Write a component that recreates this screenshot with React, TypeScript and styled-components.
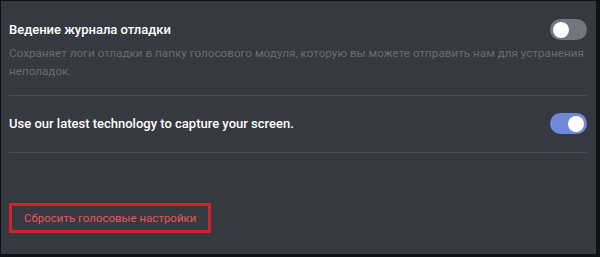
import React, { useState } from "react";
import styled, { createGlobalStyle } from "styled-components";

const Global = createGlobalStyle`
  html, body { margin: 0; padding: 0; background: #36393f; }
  * { box-sizing: border-box; }
`;

const Frame = styled.div`
  width: 600px;
  height: 257px;
  background: #36393f;
  border-style: solid;
  border-color: #101113;
  border-width: 1px 4px 3px 1px;
  padding: 18px 9px 0 8px;
  font-family: Roboto, "Noto Sans", sans-serif;
  display: flex;
  flex-direction: column;
`;

const Section = styled.div<{ $pad: number }>`
  padding-bottom: ${(p) => p.$pad}px;
  border-bottom: 1px solid #4a4d53;
`;

const Row = styled.div`
  display: flex;
  align-items: center;
  justify-content: space-between;
`;

const Title = styled.div`
  color: #ffffff;
  font-size: 13px;
  font-weight: 500;
  line-height: 21px;
`;

const Desc = styled.div`
  color: #6a6d73;
  font-size: 11.7px;
  line-height: 18px;
  margin-top: 4px;
`;

const Track = styled.button<{ $on: boolean }>`
  position: relative;
  width: 37px;
  height: 21px;
  border: none;
  padding: 0;
  border-radius: 11px;
  background: ${(p) => (p.$on ? "#7289da" : "#72767d")};
  cursor: pointer;
  flex-shrink: 0;
`;

const Knob = styled.span<{ $on: boolean }>`
  position: absolute;
  top: 2.5px;
  left: ${(p) => (p.$on ? "18px" : "3px")};
  width: 16px;
  height: 16px;
  border-radius: 50%;
  background: #ffffff;
`;

const SecondSection = styled(Section)`
  padding-top: 17px;
`;

const Highlight = styled.div`
  margin-top: 50px;
  width: 202px;
  height: 30px;
  border: 3px solid #d2232b;
  display: flex;
  align-items: center;
  padding-left: 12px;
`;

const ResetButton = styled.button`
  background: none;
  border: none;
  padding: 0;
  color: #e4575b;
  font-family: Roboto, "Noto Sans", sans-serif;
  font-size: 11.5px;
  white-space: nowrap;
  cursor: pointer;
`;

function Toggle({ initial }: { initial: boolean }) {
  const [on, setOn] = useState(initial);
  return (
    <Track $on={on} role="switch" aria-checked={on} onClick={() => setOn(!on)}>
      <Knob $on={on} />
    </Track>
  );
}

export default function App() {
  return (
    <>
      <Global />
      <Frame>
        <Section $pad={15}>
          <Row>
            <Title>Ведение журнала отладки</Title>
            <Toggle initial={false} />
          </Row>
          <Desc>
            Сохраняет логи отладки в папку голосового модуля, которую вы можете отправить нам для устранения
            неполадок.
          </Desc>
        </Section>
        <SecondSection $pad={18}>
          <Row>
            <Title>Use our latest technology to capture your screen.</Title>
            <Toggle initial={true} />
          </Row>
        </SecondSection>
        <Highlight>
          <ResetButton>Сбросить голосовые настройки</ResetButton>
        </Highlight>
      </Frame>
    </>
  );
}
